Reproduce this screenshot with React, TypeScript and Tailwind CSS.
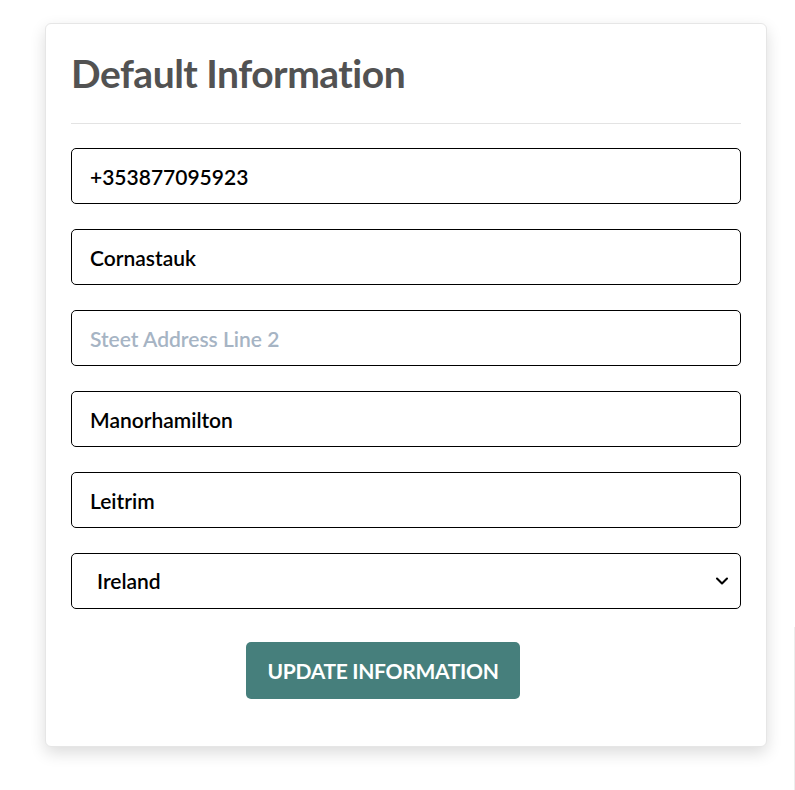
import { ChevronDown } from "lucide-react";

const fields = [
  { value: "+353877095923", placeholder: "Phone" },
  { value: "Cornastauk", placeholder: "Steet Address Line 1" },
  { value: "", placeholder: "Steet Address Line 2" },
  { value: "Manorhamilton", placeholder: "City" },
  { value: "Leitrim", placeholder: "County" },
];

export default function App() {
  return (
    <div className="flex min-h-[790px] bg-white font-['Lato','Liberation_Sans',sans-serif]">
      <div className="ml-[45px] mt-[23px] mb-[43px] w-[722px] shrink-0 self-start rounded-md border border-[#e6e6e6] bg-white shadow-[0_6px_16px_rgba(0,0,0,0.14)]">
        <div className="px-[25px] pt-[26px] pb-[47px]">
          <h2 className="text-[39px] leading-[46px] font-bold tracking-[-0.5px] text-[#525252]">
            Default Information
          </h2>
          <hr className="mt-[27px] border-t border-[#e3e3e3]" />

          <form className="mt-[24px] flex flex-col gap-[25px]">
            {fields.map((f) => (
              <input
                key={f.placeholder}
                type="text"
                defaultValue={f.value}
                placeholder={f.placeholder}
                className="h-[56px] w-full rounded-[5px] border border-black px-[18px] text-[21px] font-semibold text-black outline-none placeholder:text-[#a6b4c4]"
              />
            ))}
            <div className="relative">
              <select
                defaultValue="Ireland"
                className="h-[56px] w-full appearance-none rounded-[5px] border border-black bg-white px-[25px] text-[21px] font-semibold text-black outline-none"
              >
                <option>Ireland</option>
                <option>United Kingdom</option>
              </select>
              <ChevronDown
                size={20}
                strokeWidth={2.5}
                className="pointer-events-none absolute right-[9px] top-[18px] text-black"
              />
            </div>
          </form>

          <button
            type="button"
            className="mt-[33px] ml-[175px] h-[57px] w-[274px] rounded-[5px] bg-[#467f7c] text-[21px] font-bold tracking-[-0.3px] text-white uppercase"
          >
            Update Information
          </button>
        </div>
      </div>
      <div className="ml-[27px] mt-[627px] h-[163px] w-[2px] border-l border-[#ededed]" />
    </div>
  );
}
